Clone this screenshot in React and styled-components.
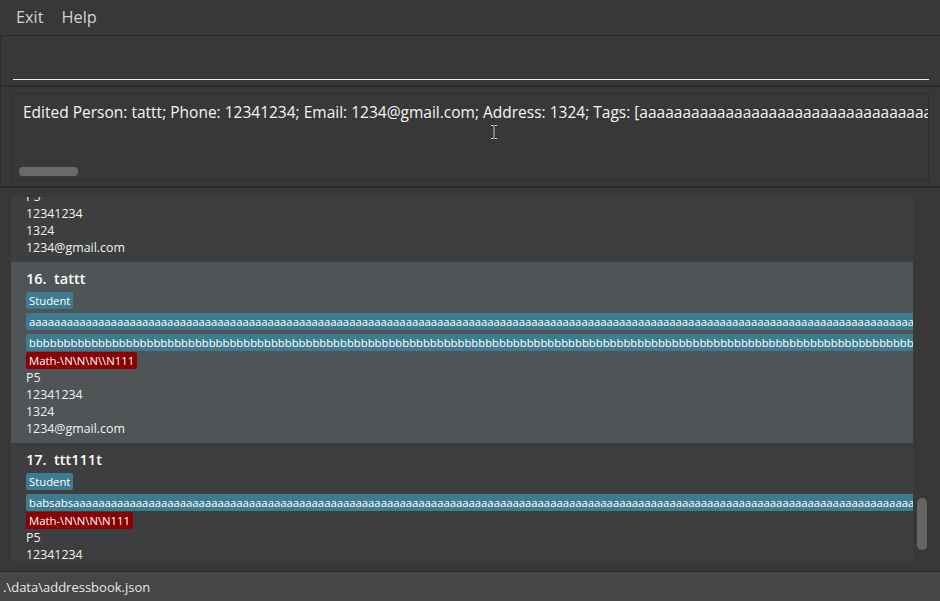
import React, { useLayoutEffect, useRef } from "react";
import styled, { createGlobalStyle } from "styled-components";

const GlobalStyle = createGlobalStyle`
  html, body { margin: 0; padding: 0; background: #383838; }
  body { font-family: "Open Sans", "Noto Sans", sans-serif; }
  * { box-sizing: border-box; }
`;

const colors = {
  pane: "#383838",
  divider: "#2b2b2b",
  cell: "#3c3e3f",
  selected: "#4f5457",
  tag: "#3e7b91",
  subject: "#8b0000",
  status: "#464646",
};

const aaa = "a".repeat(220);
const bbb = "b".repeat(200);

const persons = [
  {
    id: 15,
    name: "tattt",
    tags: [aaa, bbb],
    subject: "Math-\\N\\N\\N\\\\N111",
    level: "P5",
    phone: "12341234",
    address: "1324",
    email: "1234@gmail.com",
  },
  {
    id: 16,
    name: "tattt",
    tags: [aaa, bbb],
    subject: "Math-\\N\\N\\N\\\\N111",
    level: "P5",
    phone: "12341234",
    address: "1324",
    email: "1234@gmail.com",
    selected: true,
  },
  {
    id: 17,
    name: "ttt111t",
    tags: ["babsabs" + "a".repeat(210)],
    subject: "Math-\\N\\N\\N\\N111",
    level: "P5",
    phone: "12341234",
    address: "1324",
    email: "1234@gmail.com",
  },
];

const Window = styled.div`
  width: 940px;
  height: 601px;
  display: flex;
  flex-direction: column;
  overflow: hidden;
  background: ${colors.pane};
  color: #fff;
`;

const MenuBar = styled.div`
  height: 36px;
  flex: none;
  display: flex;
  align-items: center;
  padding-left: 7px;
  border-bottom: 1px solid ${colors.divider};
`;

const MenuItem = styled.div`
  padding: 0 9px;
  font-size: 16.3px;
  color: #d2d2d2;
  line-height: 20px;
  margin-top: -1px;
`;

const CommandPane = styled.div`
  height: 51px;
  flex: none;
  display: flex;
  align-items: flex-end;
  padding: 0 11px 5px 12px;
  border-left: 1px solid ${colors.divider};
  border-bottom: 2px solid ${colors.divider};
`;

const CommandInput = styled.input`
  width: 100%;
  height: 36px;
  background: transparent;
  border: none;
  border-bottom: 1px solid #f2f2f2;
  outline: none;
  color: #fff;
  font: inherit;
`;

const ResultPane = styled.div`
  height: 101px;
  flex: none;
  padding: 6px 11px 5px 11px;
  border-left: 1px solid ${colors.divider};
  border-bottom: 2px solid ${colors.divider};
`;

const ResultBox = styled.div`
  position: relative;
  height: 100%;
  border: 1px solid #2e2e2e;
  overflow: hidden;
`;

const ResultText = styled.div`
  padding: 8px 0 0 10px;
  font-size: 15.5px;
  line-height: 21px;
  white-space: nowrap;
  color: #f4f4f4;
`;

const HScrollThumb = styled.div`
  position: absolute;
  left: 6px;
  bottom: 4px;
  width: 59px;
  height: 9px;
  border-radius: 4px;
  background: #6a6a6a;
`;

const Cursor = styled.svg`
  position: absolute;
  left: 476px;
  top: 30px;
`;

const ListPane = styled.div`
  flex: 1;
  display: flex;
  padding: 9px 0 10px 11px;
  min-height: 0;
`;

const Viewport = styled.div`
  width: 902px;
  height: 100%;
  overflow: hidden;
`;

const ScrollTrack = styled.div`
  width: 18px;
  padding-left: 4px;
`;

const ScrollThumb = styled.div`
  width: 10px;
  height: 52px;
  margin-top: ${(p) => p.$offset}px;
  border-radius: 5px;
  background: #656565;
`;

const Cell = styled.div`
  display: flex;
  flex-direction: column;
  align-items: flex-start;
  padding: 7px 0 6px 15px;
  overflow: hidden;
  background: ${(p) => (p.$selected ? colors.selected : colors.cell)};
`;

const Name = styled.div`
  font-size: 14.5px;
  font-weight: 600;
  line-height: 20px;
  white-space: pre;
  color: #fff;
  margin-bottom: 3px;
`;

const Tag = styled.span`
  display: block;
  font-size: 11.3px;
  line-height: 17px;
  padding: 0 3px;
  border-radius: 2px;
  white-space: nowrap;
  color: #fff;
  background: ${(p) => p.$bg};
  margin-bottom: ${(p) => p.$gap}px;
`;

const Detail = styled.div`
  font-size: 12.4px;
  line-height: 17px;
  color: #f2f2f2;
  white-space: nowrap;
`;

const StatusBar = styled.div`
  height: 30px;
  flex: none;
  display: flex;
  align-items: center;
  padding-left: 3px;
  background: ${colors.status};
  border-top: 1px solid ${colors.divider};
  font-size: 13px;
  color: #e6e6e6;
`;

const PersonCard = ({ person, cellRef }) => (
  <Cell $selected={person.selected} ref={cellRef}>
    <Name>{`${person.id}.  ${person.name}`}</Name>
    <Tag $bg={colors.tag} $gap={4}>Student</Tag>
    {person.tags.map((t, i) => (
      <Tag key={i} $bg={colors.tag} $gap={i === person.tags.length - 1 ? 1 : 4}>
        {t}
      </Tag>
    ))}
    <Tag $bg={colors.subject} $gap={0}>{person.subject}</Tag>
    <Detail>{person.level}</Detail>
    <Detail>{person.phone}</Detail>
    <Detail>{person.address}</Detail>
    <Detail>{person.email}</Detail>
  </Cell>
);

const App = () => {
  const viewRef = useRef(null);
  const firstRef = useRef(null);

  // list is scrolled so only the tail of entry 15 shows
  useLayoutEffect(() => {
    if (viewRef.current && firstRef.current) {
      viewRef.current.scrollTop = firstRef.current.offsetHeight - 65;
    }
  }, []);

  return (
    <Window>
      <GlobalStyle />
      <MenuBar>
        <MenuItem>Exit</MenuItem>
        <MenuItem>Help</MenuItem>
      </MenuBar>
      <CommandPane>
        <CommandInput />
      </CommandPane>
      <ResultPane>
        <ResultBox>
          <ResultText>
            {"Edited Person: tattt; Phone: 12341234; Email: 1234@gmail.com; Address: 1324; Tags: [" + "a".repeat(120)}
          </ResultText>
          <Cursor width="10" height="16" viewBox="0 0 10 16">
            <path d="M2 1.5h2.2M5.8 1.5H8M5 2v12M2 14.5h2.2M5.8 14.5H8" stroke="#1a1a1a" strokeWidth="2.2" fill="none" />
            <path d="M2 1.5h2.5M5.5 1.5H8M5 2v12M2 14.5h2.5M5.5 14.5H8" stroke="#e8e8e8" strokeWidth="1" fill="none" />
          </Cursor>
          <HScrollThumb />
        </ResultBox>
      </ResultPane>
      <ListPane>
        <Viewport ref={viewRef}>
          {persons.map((p, i) => (
            <PersonCard key={p.id} person={p} cellRef={i === 0 ? firstRef : null} />
          ))}
        </Viewport>
        <ScrollTrack>
          <ScrollThumb $offset={301} />
        </ScrollTrack>
      </ListPane>
      <StatusBar>.\data\addressbook.json</StatusBar>
    </Window>
  );
};

export default App;
